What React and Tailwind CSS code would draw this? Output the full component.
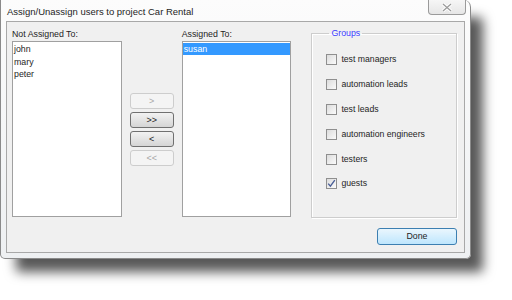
import React from "react";

const font = { fontFamily: '"Liberation Sans", Arial, sans-serif' };

function Check({ label, checked }) {
  return (
    <div className="flex h-[24.8px] items-center">
      <div className="flex h-[11px] w-[11px] items-center justify-center border border-[#8f8f8f] bg-gradient-to-br from-[#dcdcdc] to-[#fbfbfb]">
        {checked && (
          <svg width="9" height="9" viewBox="0 0 9 9">
            <path d="M1.2 4.6 L3.4 7.2 L7.8 1.2" fill="none" stroke="#4a5f97" strokeWidth="1.4" />
          </svg>
        )}
      </div>
      <span className="ml-[4px] text-[8.7px] leading-[13px] text-[#1e1e1e]">{label}</span>
    </div>
  );
}

function MoveBtn({ label, enabled }) {
  return enabled ? (
    <div className="flex h-[16px] w-[44px] items-center justify-center rounded-[3px] border border-[#707070] bg-gradient-to-b from-[#f2f2f2] to-[#d5d5d5] text-[9px] leading-[10px] text-[#222]">
      {label}
    </div>
  ) : (
    <div className="flex h-[16px] w-[44px] items-center justify-center rounded-[3px] border border-[#cdcdcd] bg-[#f4f4f4] text-[9px] leading-[10px] text-[#a8a8a8]">
      {label}
    </div>
  );
}

export default function App() {
  return (
    <div className="h-[300px] w-[512px] overflow-hidden bg-white" style={font}>
      <div className="flex h-[259px] w-[471px] flex-col rounded-b-[5px] rounded-tr-[7px] border border-t-0 border-[#8a8a8a] bg-gradient-to-b from-[#fcfcfc] to-[#eef0f2] px-[5px] pb-[5px] shadow-[14px_15px_12px_-2px_rgba(0,0,0,0.66)]">
        <div className="flex h-[21px] items-start justify-between">
          <div className="mt-[6px] pl-[1px] text-[9.5px] leading-[12px] text-[#1e1e1e]">
            Assign/Unassign users to project Car Rental
          </div>
          <div className="mr-[-1px] flex h-[15px] w-[38px] items-center justify-center rounded-b-[4px] border border-t-0 border-[#9a9a9a] bg-gradient-to-b from-[#f6f6f6] to-[#e6e6e6]">
            <svg width="10" height="9" viewBox="0 0 10 9">
              <path d="M1 1 L9 8 M9 1 L1 8" stroke="#ffffff" strokeWidth="3" />
              <path d="M1 1 L9 8 M9 1 L1 8" stroke="#9a9a9a" strokeWidth="1.2" />
            </svg>
          </div>
        </div>
        <div className="flex flex-1 flex-col border border-[#a8a8a8] bg-[#f0f0f0] pl-[5px] pr-[7px] pt-[6px]">
          <div className="flex items-start">
            <div className="flex w-[110px] flex-col">
              <div className="h-[13px] text-[8.8px] leading-[13px] text-[#1e1e1e]">Not Assigned To:</div>
              <div className="h-[176px] border border-[#a0a0a0] bg-white pt-[1px] text-[8.8px] leading-[12.5px] text-[#1e1e1e]">
                <div className="pl-[1px]">john</div>
                <div className="pl-[1px]">mary</div>
                <div className="pl-[1px]">peter</div>
              </div>
            </div>
            <div className="ml-[8px] mt-[13px] flex h-[176px] w-[44px] flex-col justify-center gap-[3px]">
              <MoveBtn label=">" />
              <MoveBtn label=">>" enabled />
              <MoveBtn label="<" enabled />
              <MoveBtn label="<<" />
            </div>
            <div className="ml-[8px] flex w-[110px] flex-col">
              <div className="h-[13px] text-[8.8px] leading-[13px] text-[#1e1e1e]">Assigned To:</div>
              <div className="h-[176px] border border-[#a0a0a0] bg-white pt-[1px] text-[8.8px] leading-[12px]">
                <div className="bg-[#3399ff] pl-[1px] text-white">susan</div>
              </div>
            </div>
            <fieldset className="ml-[20px] mt-[-1px] h-[191px] w-[146px] border border-[#cdcdcd] pl-[14px] shadow-[inset_1px_1px_0_#fff,1px_1px_0_#fff]">
              <legend className="ml-[3px] px-[2px] text-[8.8px] leading-[13px] text-[#3a3aff]">Groups</legend>
              <div className="flex flex-col pt-[7.6px]">
                <Check label="test managers" />
                <Check label="automation leads" />
                <Check label="test leads" />
                <Check label="automation engineers" />
                <Check label="testers" />
                <Check label="guests" checked />
              </div>
            </fieldset>
          </div>
          <div className="mt-[10px] flex justify-end">
            <div className="flex h-[17px] w-[80px] items-center justify-center rounded-[3px] border border-[#3c7fb1] bg-gradient-to-b from-[#eaf6fd] to-[#bee6fd] text-[8.8px] leading-[13px] text-[#1e1e1e]">
              Done
            </div>
          </div>
        </div>
      </div>
    </div>
  );
}
